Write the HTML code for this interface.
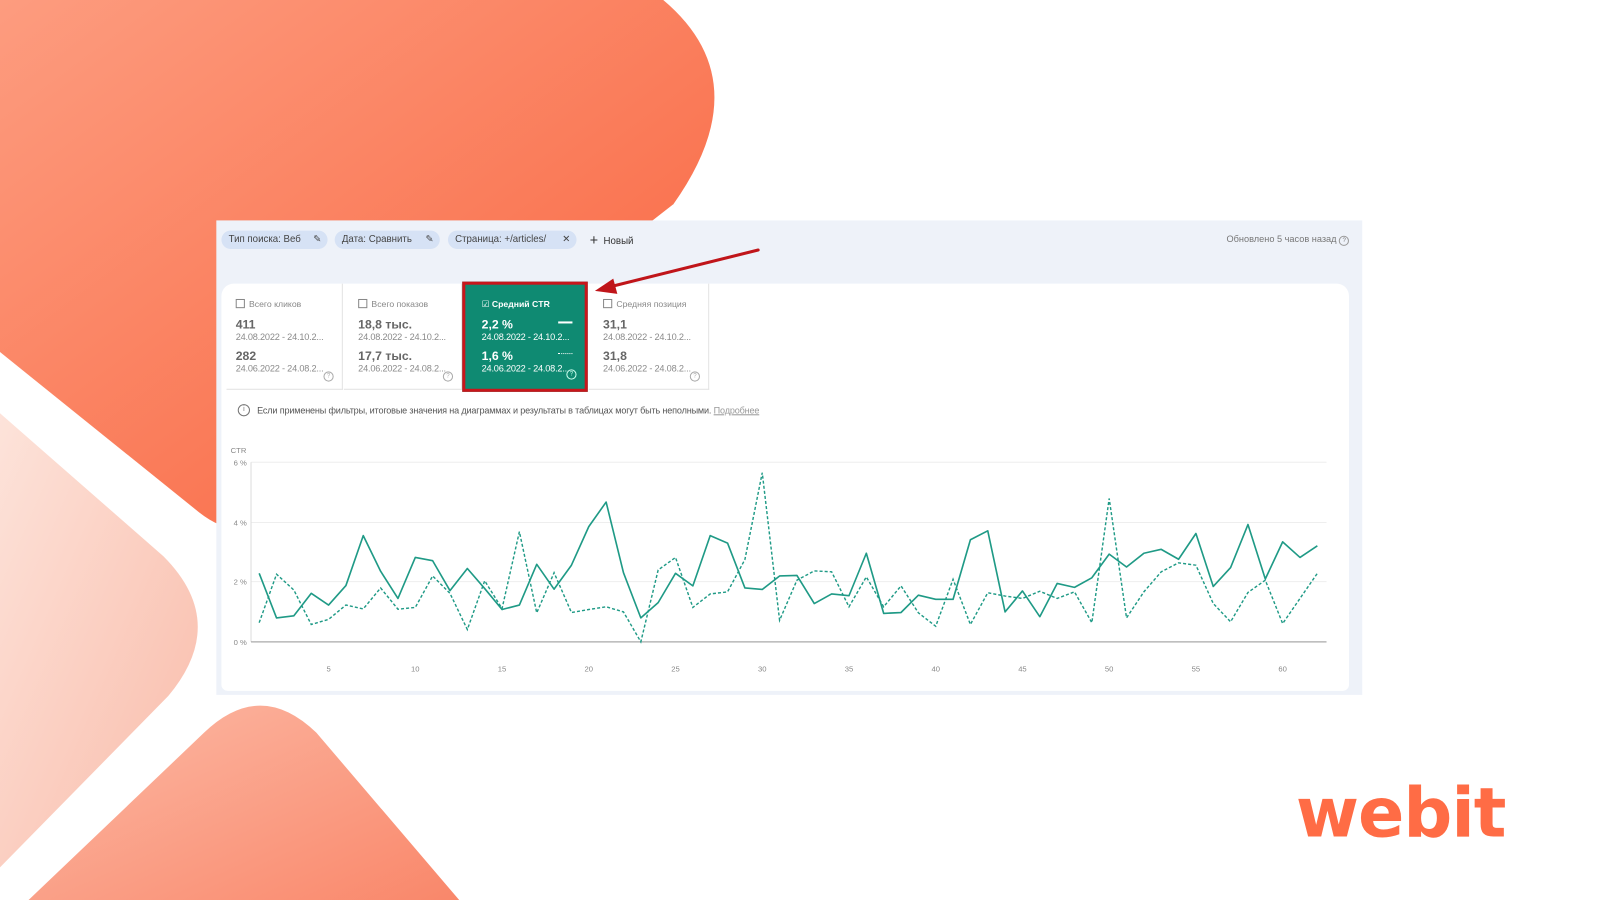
<!DOCTYPE html>
<html><head><meta charset="utf-8">
<style>
html,body{margin:0;padding:0;width:1600px;height:900px;overflow:hidden;background:#fff;}
#w{position:absolute;left:0;top:0;width:1568px;height:882px;transform:scale(1.020408);transform-origin:0 0;font-family:"Liberation Sans","DejaVu Sans",sans-serif;}
.a{position:absolute;}
.panel{left:212px;top:216px;width:1123px;height:465px;background:#eef2f9;}
.chip{top:226px;height:18px;border-radius:9px;background:#d6e2f5;font-size:9.5px;color:#444;line-height:18px;padding-left:7px;box-sizing:border-box;}
.card{background:#fff;left:217px;top:278px;width:1105px;height:399px;border-radius:12px 12px 6px 6px;}
.m{top:278px;height:104px;border-right:1px solid #e3e3e3;border-bottom:1px solid #e3e3e3;box-sizing:border-box;font-size:8.5px;color:#888;}
.m .l{position:absolute;left:9px;top:15px;}
.m .cb{display:inline-block;width:7px;height:7px;border:1px solid #888;vertical-align:-1px;margin-right:4px;}
.m .v{position:absolute;left:9px;font-size:12px;font-weight:bold;color:#666;}
.m .d{position:absolute;left:9px;font-size:9px;color:#8a8a8a;letter-spacing:-0.2px;}
.m .q{position:absolute;right:8px;top:86px;width:8px;height:8px;border:1px solid #aaa;border-radius:50%;font-size:6px;line-height:8px;text-align:center;color:#aaa;}
.g{background:#0f8a72;color:#fff;}
.g .v,.g .d,.g .l{color:#fff;}
.g .cb{border-color:#fff;}
.ax{font-size:7.5px;color:#888;}
</style></head><body>
<div id="w">
<svg class="a" style="left:0;top:0" width="1568" height="882">
<defs>
<linearGradient id="g1" x1="0" y1="0" x2="1" y2="1"><stop offset="0" stop-color="#fd9c7f"/><stop offset="1" stop-color="#f8623c"/></linearGradient>
<linearGradient id="g2" x1="0" y1="0" x2="1" y2="1"><stop offset="0" stop-color="#fde3da"/><stop offset="1" stop-color="#f9bba9"/></linearGradient>
<linearGradient id="g3" x1="0" y1="0" x2="1" y2="1"><stop offset="0" stop-color="#fcbaa6"/><stop offset="1" stop-color="#f9876a"/></linearGradient>
</defs>
<path d="M0,0 L650,0 Q745,80 660,200 L270,505 Q234,533 195,502 L0,345 Z" fill="url(#g1)"/>
<path d="M0,405 L160,545 Q225,610 165,682 L0,850 Z" fill="url(#g2)"/>
<path d="M28,882 L200,718 Q255,665 310,718 L450,882 Z" fill="url(#g3)"/>
</svg>

<div class="a panel"></div>
<div class="a chip" style="left:217px;width:104px;">Тип поиска: Веб <span style="position:absolute;right:6px;">✎</span></div>
<div class="a chip" style="left:328px;width:103px;">Дата: Сравнить <span style="position:absolute;right:6px;">✎</span></div>
<div class="a chip" style="left:439px;width:126px;">Страница: +/articles/ <span style="position:absolute;right:6px;">✕</span></div>
<div class="a" style="left:578px;top:226px;font-size:9.5px;line-height:18px;color:#333;"><span style="font-size:14px;vertical-align:-1px;">+</span>&nbsp; Новый</div>
<div class="a" style="left:1202px;top:229px;font-size:9px;color:#777;">Обновлено 5 часов назад <span style="display:inline-block;width:8px;height:8px;border:1px solid #999;border-radius:50%;font-size:6px;line-height:8px;text-align:center;">?</span></div>

<div class="a card"></div>
<div class="a m" style="left:222px;width:114px;"><div class="l"><span class="cb"></span>Всего кликов</div><div class="v" style="top:33px">411</div><div class="d" style="top:47px">24.08.2022 - 24.10.2...</div><div class="v" style="top:64px">282</div><div class="d" style="top:78px">24.06.2022 - 24.08.2...</div><div class="q">?</div></div>
<div class="a m" style="left:337px;width:116px;"><div class="l" style="left:14px"><span class="cb"></span>Всего показов</div><div class="v" style="top:33px;left:14px">18,8 тыс.</div><div class="d" style="top:47px;left:14px">24.08.2022 - 24.10.2...</div><div class="v" style="top:64px;left:14px">17,7 тыс.</div><div class="d" style="top:78px;left:14px">24.06.2022 - 24.08.2...</div><div class="q">?</div></div>
<div class="a m g" style="left:453px;top:276px;width:123px;height:108px;border:3px solid #c8161b;"><div class="l" style="left:16px;top:14px;font-weight:bold;">☑ Средний CTR</div><div class="v" style="top:32px;left:16px">2,2 %</div><div class="d" style="top:46px;left:16px">24.08.2022 - 24.10.2...</div><div class="v" style="top:63px;left:16px">1,6 %</div><div class="d" style="top:77px;left:16px">24.06.2022 - 24.08.2...</div><div style="position:absolute;left:91px;top:36px;width:14px;height:1.5px;background:#fff"></div><div style="position:absolute;left:91px;top:67px;width:14px;border-top:1.5px dotted #fff"></div><div class="q" style="border-color:#cfe;color:#cfe;top:83px">?</div></div>
<div class="a m" style="left:577px;width:118px;"><div class="l" style="left:14px"><span class="cb"></span>Средняя позиция</div><div class="v" style="top:33px;left:14px">31,1</div><div class="d" style="top:47px;left:14px">24.08.2022 - 24.10.2...</div><div class="v" style="top:64px;left:14px">31,8</div><div class="d" style="top:78px;left:14px">24.06.2022 - 24.08.2...</div><div class="q">?</div></div>

<div class="a" style="left:233px;top:396px;width:10px;height:10px;border:1px solid #777;border-radius:50%;font-size:7px;line-height:10px;text-align:center;color:#777;">i</div>
<div class="a" style="left:252px;top:397px;font-size:8.9px;color:#555;white-space:nowrap;letter-spacing:-0.15px;">Если применены фильтры, итоговые значения на диаграммах и результаты в таблицах могут быть неполными. <span style="color:#999;text-decoration:underline;">Подробнее</span></div>

<div class="a ax" style="left:226px;top:437px;">CTR</div>
<div class="a ax" style="left:229px;top:449px;">6 %</div>
<div class="a ax" style="left:229px;top:508px;">4 %</div>
<div class="a ax" style="left:229px;top:566px;">2 %</div>
<div class="a ax" style="left:229px;top:625px;">0 %</div>
<svg class="a" style="left:0;top:0" width="1568" height="882">
<g stroke="#eeeeee" stroke-width="1"><line x1="246" y1="453" x2="1300" y2="453"/><line x1="246" y1="512" x2="1300" y2="512"/><line x1="246" y1="570" x2="1300" y2="570"/></g>
<line x1="246" y1="453" x2="246" y2="629" stroke="#ddd"/>
<line x1="246" y1="629" x2="1300" y2="629" stroke="#aaa" stroke-width="1.2"/>
<g transform="translate(254,629) scale(17,-29.33)" fill="none" stroke="#1f9a86">
<polyline vector-effect="non-scaling-stroke" stroke-width="1.6" stroke-linejoin="round" points="0,2.29 1,0.8 2,0.87 3,1.62 4,1.23 5,1.88 6,3.55 7,2.36 8,1.45 9,2.82 10,2.71 11,1.71 12,2.45 13,1.78 14,1.08 15,1.23 16,2.59 17,1.76 18,2.56 19,3.85 20,4.67 21,2.31 22,0.8 23,1.31 24,2.29 25,1.87 26,3.55 27,3.3 28,1.8 29,1.75 30,2.2 31,2.22 32,1.28 33,1.6 34,1.54 35,2.96 36,0.95 37,0.98 38,1.56 39,1.42 40,1.42 41,3.41 42,3.71 43,1.0 44,1.7 45,0.84 46,1.95 47,1.82 48,2.14 49,2.93 50,2.5 51,2.96 52,3.09 53,2.76 54,3.62 55,1.85 56,2.48 57,3.92 58,2.1 59,3.34 60,2.82 61,3.21"/>
<polyline vector-effect="non-scaling-stroke" stroke-width="1.4" stroke-dasharray="3,2" points="0,0.64 1,2.26 2,1.73 3,0.58 4,0.75 5,1.23 6,1.1 7,1.8 8,1.09 9,1.15 10,2.2 11,1.62 12,0.41 13,2.04 14,1.11 15,3.68 16,0.97 17,2.31 18,0.98 19,1.08 20,1.17 21,1.0 22,0 23,2.4 24,2.82 25,1.15 26,1.6 27,1.67 28,2.75 29,5.65 30,0.72 31,2.06 32,2.37 33,2.34 34,1.17 35,2.17 36,1.17 37,1.87 38,0.97 39,0.52 40,2.09 41,0.58 42,1.64 43,1.53 44,1.45 45,1.69 46,1.45 47,1.67 48,0.64 49,4.79 50,0.8 51,1.67 52,2.34 53,2.64 54,2.56 55,1.28 56,0.67 57,1.65 58,2.06 59,0.61 60,1.45 61,2.29"/>
</g>
<g font-size="7.5" fill="#888" text-anchor="middle" font-family="Liberation Sans, sans-serif">
<text x="322" y="658">5</text><text x="407" y="658">10</text><text x="492" y="658">15</text><text x="577" y="658">20</text><text x="662" y="658">25</text><text x="747" y="658">30</text><text x="832" y="658">35</text><text x="917" y="658">40</text><text x="1002" y="658">45</text><text x="1087" y="658">50</text><text x="1172" y="658">55</text><text x="1257" y="658">60</text>
</g>
<line x1="743" y1="245" x2="598" y2="281" stroke="#c0151a" stroke-width="3" stroke-linecap="round"/>
<path d="M583,285 L601,273 L605,288 Z" fill="#c0151a"/>
</svg>

<div class="a" style="left:1270px;top:757px;font-family:'DejaVu Sans',sans-serif;font-weight:bold;font-size:67px;letter-spacing:-1px;color:#ff6c45;line-height:80px;">webit</div>
</div>
</body></html>
